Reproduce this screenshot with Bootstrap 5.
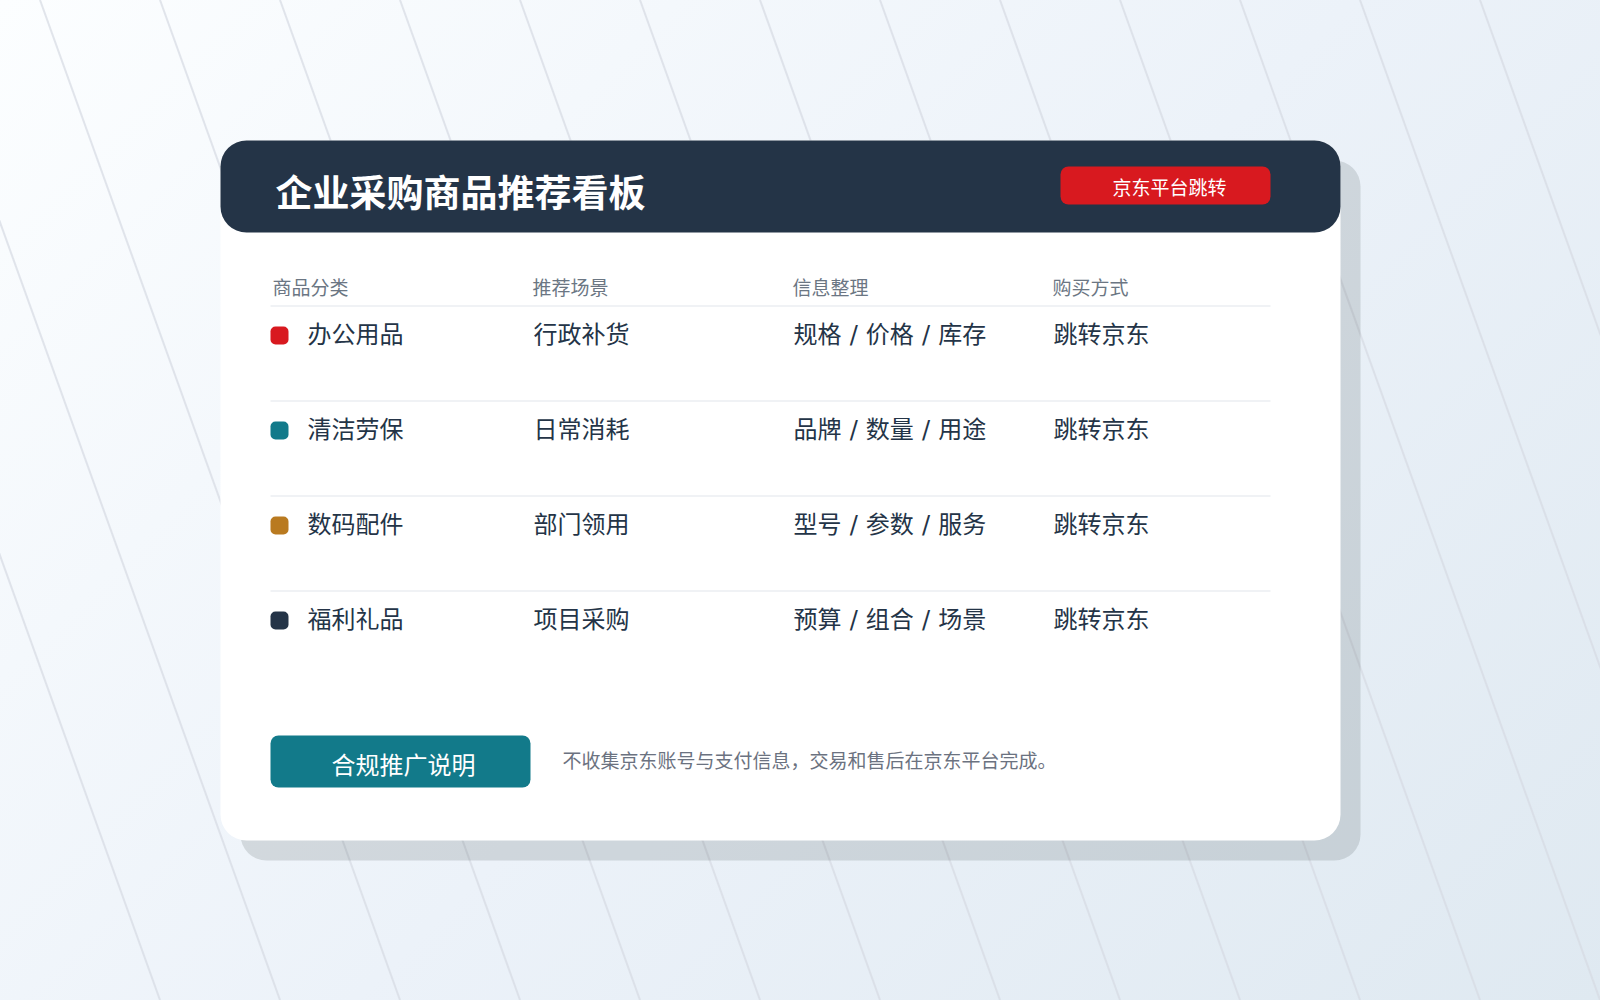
<!DOCTYPE html>
<html lang="zh-CN">
<head>
    <meta charset="UTF-8">
    <title>企业采购商品推荐看板</title>
    <link href="https://cdn.jsdelivr.net/npm/bootstrap@5.3.0/dist/css/bootstrap.min.css" rel="stylesheet">
    <style>
        body {
            height: 1000px;
            overflow: hidden;
            background: linear-gradient(135deg, #fcfeff 0%, #ecf2f9 52%, #dfe9f1 100%);
            font-family: "DejaVu Sans", "Noto Sans CJK SC", sans-serif;
            color: #243447;
        }
        .bg-lines {
            position: absolute;
            top: 0;
            left: 0;
        }
        .board {
            position: relative;
            width: 1120px;
            height: 700px;
            margin: 140px 0 0 220px;
            background: #fff;
            border-radius: 26px;
            box-shadow: 20px 20px 0 rgba(36, 52, 50, .14);
            transform: translate(.5px, .5px);
        }
        .board-head {
            height: 92px;
            padding: 0 70px 0 55px;
            background: #243447;
            border-radius: 26px;
        }
        .board-title {
            margin: 16px 0 0;
            font-size: 37px;
            font-weight: 700;
            color: #fff;
        }
        .jd-btn {
            width: 210px;
            height: 38px;
            margin-top: -2px;
            padding: 4px 0 0 8px;
            background: #d8191f;
            border: 0;
            border-radius: 8px;
            font-size: 19px;
            color: #fff;
        }
        .board-body {
            padding: 41px 70px 0 50px;
        }
        .grid-row {
            display: grid;
            grid-template-columns: 260px 260px 260px 220px;
        }
        .grid-head {
            height: 33px;
            border-bottom: 1px solid #e1e5ec;
            font-size: 19px;
            line-height: 28px;
            color: #6b7683;
        }
        .grid-head div {
            padding-left: 2px;
        }
        .grid-item {
            height: 95px;
            padding-top: 10px;
            border-bottom: 1px solid #e1e5ec;
            font-size: 24px;
            line-height: 36px;
            word-spacing: .5px;
        }
        .grid-item:nth-last-child(2) {
            border-bottom: 0;
        }
        .grid-item div {
            padding-left: 3px;
        }
        .grid-item .cat-cell {
            padding-left: 0;
        }
        .cat-dot {
            width: 18px;
            height: 18px;
            margin: 2px 19px 0 0;
            border-radius: 5px;
        }
        .board-foot {
            margin-top: 49px;
        }
        .note-btn {
            width: 260px;
            height: 52px;
            padding: 7px 0 0 6px;
            background: #127a8a;
            border: 0;
            border-radius: 8px;
            font-size: 24px;
            color: #fff;
        }
        .note-text {
            margin: -2px 0 0 32px;
            font-size: 19px;
            color: #6b7280;
        }
    </style>
</head>
<body>
    <svg class="bg-lines" width="1600" height="1000" stroke="#d5dae3" stroke-opacity=".7" stroke-width="2">
        <line x1="-200" y1="0" x2="160" y2="1000"/>
        <line x1="-80" y1="0" x2="280" y2="1000"/>
        <line x1="40" y1="0" x2="400" y2="1000"/>
        <line x1="160" y1="0" x2="520" y2="1000"/>
        <line x1="280" y1="0" x2="640" y2="1000"/>
        <line x1="400" y1="0" x2="760" y2="1000"/>
        <line x1="520" y1="0" x2="880" y2="1000"/>
        <line x1="640" y1="0" x2="1000" y2="1000"/>
        <line x1="760" y1="0" x2="1120" y2="1000"/>
        <line x1="880" y1="0" x2="1240" y2="1000"/>
        <line x1="1000" y1="0" x2="1360" y2="1000"/>
        <line x1="1120" y1="0" x2="1480" y2="1000"/>
        <line x1="1240" y1="0" x2="1600" y2="1000"/>
        <line x1="1360" y1="0" x2="1720" y2="1000"/>
        <line x1="1480" y1="0" x2="1840" y2="1000"/>
    </svg>

    <div class="board">
        <div class="board-head d-flex justify-content-between align-items-center">
            <h1 class="board-title">企业采购商品推荐看板</h1>
            <button type="button" class="btn jd-btn">京东平台跳转</button>
        </div>

        <div class="board-body">
            <div class="grid-row grid-head">
                <div>商品分类</div>
                <div>推荐场景</div>
                <div>信息整理</div>
                <div>购买方式</div>
            </div>
            <div class="grid-row grid-item">
                <div class="cat-cell d-flex align-items-center align-self-start"><span class="cat-dot" style="background:#d8191f"></span>办公用品</div>
                <div>行政补货</div>
                <div>规格 / 价格 / 库存</div>
                <div>跳转京东</div>
            </div>
            <div class="grid-row grid-item">
                <div class="cat-cell d-flex align-items-center align-self-start"><span class="cat-dot" style="background:#127a8a"></span>清洁劳保</div>
                <div>日常消耗</div>
                <div>品牌 / 数量 / 用途</div>
                <div>跳转京东</div>
            </div>
            <div class="grid-row grid-item">
                <div class="cat-cell d-flex align-items-center align-self-start"><span class="cat-dot" style="background:#b97a20"></span>数码配件</div>
                <div>部门领用</div>
                <div>型号 / 参数 / 服务</div>
                <div>跳转京东</div>
            </div>
            <div class="grid-row grid-item">
                <div class="cat-cell d-flex align-items-center align-self-start"><span class="cat-dot" style="background:#243447"></span>福利礼品</div>
                <div>项目采购</div>
                <div>预算 / 组合 / 场景</div>
                <div>跳转京东</div>
            </div>

            <div class="board-foot d-flex align-items-center">
                <button type="button" class="btn note-btn">合规推广说明</button>
                <p class="note-text">不收集京东账号与支付信息，交易和售后在京东平台完成。</p>
            </div>
        </div>
    </div>

    <script src="https://cdn.jsdelivr.net/npm/bootstrap@5.3.0/dist/js/bootstrap.bundle.min.js"></script>
</body>
</html>
